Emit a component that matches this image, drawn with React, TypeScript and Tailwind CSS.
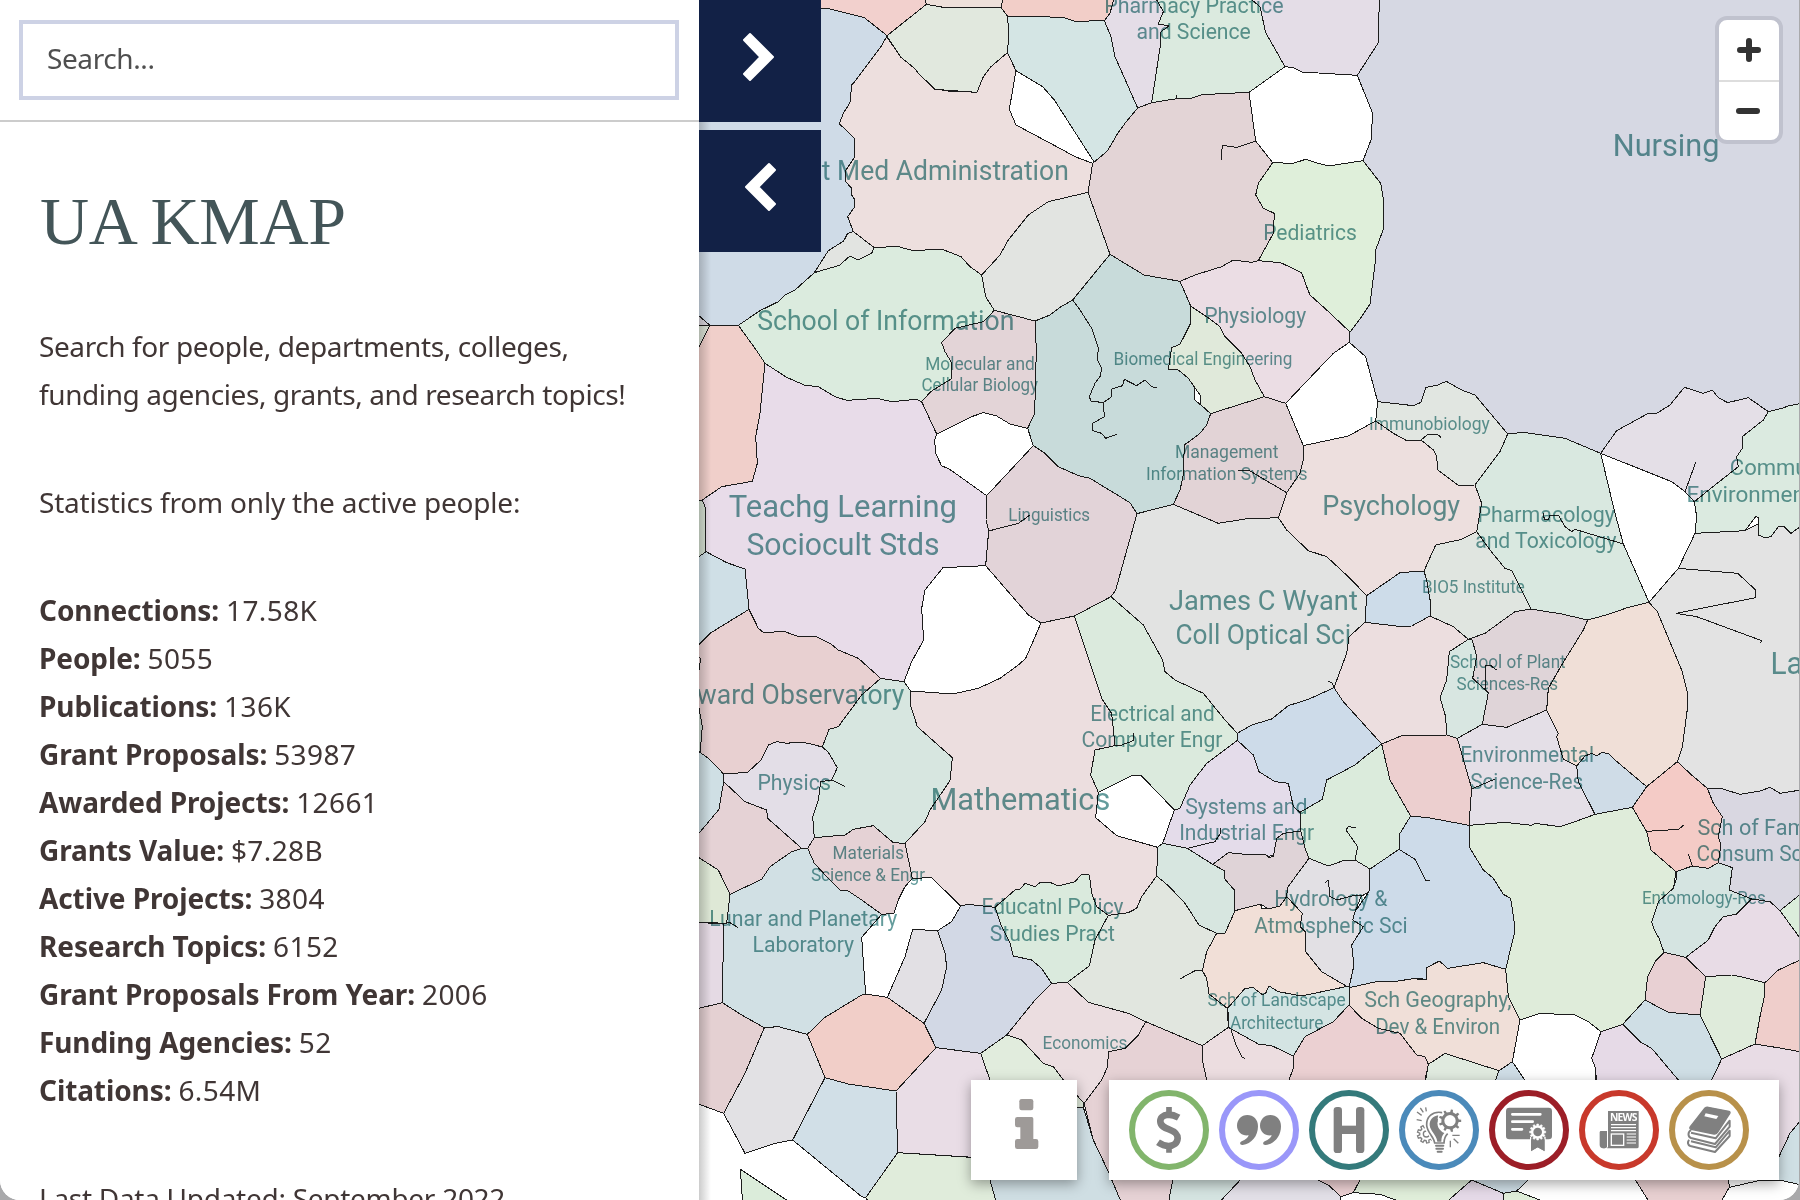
import React from "react";

/* Map geometry is expressed in map units, three per screen pixel. */
type Cell = [string, string];

const cells: Cell[] = [
  ["#d6d8e3", "2030,-9 2030,120 1970,230 2000,340 1990,480 2040,560 2040,700 1990,910 1950,990 1950,1030 1990,1100 2030,1220 2200,1320 2700,1420 3330,1420 3330,-9"],
  ["#cfdbe7", "-9,-9 600,-9 600,990 -9,990"],
  ["#f2d0cd", "360,24 405,27 508,53 575,106 720,60 700,-9 360,-9"],
  ["#eee0da", "688,-9 694,13 745,22 918,22 926,-9"],
  ["#f2cec8", "926,-9 918,22 937,48 1105,52 1140,64 1228,62 1245,40 1258,-9"],
  ["#d4e5e4", "937,48 1105,52 1140,64 1228,62 1248,110 1260,170 1328,324 1290,370 1268,400 1238,452 1198,487 1078,400 963,212 937,158 942,100"],
  ["#e1e8de", "694,13 745,22 918,22 937,48 942,100 937,158 888,200 865,230 846,277 720,268 670,220 662,208 618,172 575,108"],
  ["#eddfde", "575,110 618,172 662,208 670,220 720,268 740,270 778,276 790,274 846,277 865,230 888,200 937,158 963,212 943,328 963,375 1100,448 1193,490 1179,577 1060,605 1000,645 940,720 915,765 860,825 825,800 798,770 742,748 725,752 690,750 655,752 610,740 537,742 475,695 458,650 478,622 480,600 470,585 470,565 452,545 452,512 480,470 478,415 433,371 445,340 465,308 470,255 475,250 558,140"],
  ["#ffffff", "963,212 1043,260 1078,300 1198,487 1193,490 1140,470 1100,448 963,375 943,328"],
  ["#e2e4e1", "475,695 537,742 530,760 490,780 465,768 433,796 358,818 400,752 446,723 458,700"],
  ["#dbebde", "537,742 610,740 655,752 690,750 742,748 798,770 825,800 860,825 872,890 898,931 865,965 780,985 740,1028 750,1055 768,1085 768,1137 707,1175 680,1205 665,1198 590,1205 545,1195 455,1201 420,1190 370,1160 330,1156 275,1132 210,1090 180,1045 130,976 195,932 250,905 270,885 300,870 358,818 433,796 465,768 490,780 530,760"],
  ["#e2e4e1", "1179,577 1245,763 1133,900 1095,922 1065,945 1020,963 898,931 872,890 860,825 915,765 940,720 1000,645 1060,605"],
  ["#e3d4d6", "1193,490 1238,452 1268,400 1290,370 1328,324 1370,308 1445,296 1485,296 1520,284 1662,277 1682,423 1733,488 1690,550 1682,585 1705,625 1738,640 1735,700 1690,782 1670,787 1615,780 1580,800 1500,825 1455,844 1347,825 1245,763 1179,577"],
  ["#e4dde7", "1258,-9 1245,40 1228,62 1248,110 1260,170 1328,324 1370,308 1397,130 1398,95 1422,78 1390,72 1405,35 1380,-9"],
  ["#dbeadf", "1380,-9 1405,35 1390,72 1422,78 1398,95 1397,130 1370,308 1445,296 1485,296 1520,284 1662,277 1770,200 1712,98 1695,20 1660,-9"],
  ["#e4dde7", "1660,-9 1695,20 1712,98 1770,200 1795,203 1820,216 1987,226 2050,128 2053,-9"],
  ["#ffffff", "1662,277 1770,200 1795,203 1820,216 1987,226 2033,340 2028,420 2004,482 1900,498 1870,490 1832,478 1795,490 1733,488 1682,423"],
  ["#dfefda", "1733,488 1795,490 1832,478 1870,490 1900,498 2004,482 2057,550 2067,610 2066,685 2042,750 2042,775 2025,912 1995,957 1965,996 1895,930 1845,885 1835,860 1820,818 1757,788 1690,782 1735,700 1738,640 1705,625 1682,585 1690,550"],
  ["#ebdde4", "1690,782 1757,788 1820,818 1835,860 1845,885 1895,930 1965,996 1963,1027 1915,1060 1772,1210 1708,1190 1680,1140 1665,1100 1640,1060 1590,1010 1575,980 1535,950 1487,918 1455,844 1500,825 1580,800 1615,780 1670,787"],
  ["#c8dbda", "1245,763 1347,825 1455,844 1487,918 1487,970 1500,1200 1547,1241 1535,1275 1515,1300 1468,1335 1465,1425 1455,1470 1435,1513 1326,1541 1305,1508 1185,1435 1150,1427 1090,1400 1050,1360 1015,1337 998,1285 1019,1240 1024,1050 1020,963 1065,945 1095,922 1133,900"],
  ["#e0e9da", "1487,918 1535,950 1575,980 1590,1010 1640,1060 1665,1100 1680,1140 1708,1190 1547,1241 1518,1215 1515,1185 1480,1135 1450,1110 1420,1108 1430,1043 1455,1033 1487,970"],
  ["#e3d4d7", "898,931 1020,963 1024,1050 1019,1240 998,1285 945,1272 905,1248 865,1238 830,1250 725,1302 680,1205 707,1175 768,1137 768,1085 750,1055 740,1028 780,985 865,965"],
  ["#ffffff", "725,1302 830,1250 865,1238 905,1248 945,1272 998,1285 1015,1337 875,1487 760,1405 740,1398 722,1360 719,1320"],
  ["#e8dce9", "210,1090 275,1132 330,1156 370,1160 420,1190 455,1201 545,1195 590,1205 665,1198 680,1205 725,1302 719,1320 722,1360 740,1398 760,1405 875,1487 873,1560 881,1593 872,1697 744,1703 690,1770 680,1825 686,1920 650,1985 627,2045 557,2035 490,1975 430,1950 408,1932 365,1910 305,1908 270,1895 205,1897 190,1885 162,1828 150,1707 95,1688 33,1655 30,1520 22,1500 80,1460 172,1444 187,1390 182,1310 195,1240"],
  ["#d9d6dc", "-9,930 15,950 45,976 -9,978"],
  ["#dbe3d6", "-9,978 45,976 12,1040 -9,1060"],
  ["#f0cfca", "45,976 130,976 180,1045 210,1090 195,1240 182,1310 187,1390 172,1444 80,1460 22,1500 -9,1500 -9,1060 12,1040"],
  ["#d6e2d3", "-9,1500 22,1500 30,1520 33,1655 -9,1685"],
  ["#cfdfe6", "-9,1685 33,1655 95,1688 150,1707 162,1828 110,1860 45,1900 -9,1955"],
  ["#e8d0d1", "162,1828 190,1885 205,1897 270,1895 305,1908 365,1910 408,1932 430,1950 490,1975 557,2035 500,2085 430,2180 402,2188 382,2241 340,2230 310,2226 275,2230 245,2225 220,2235 198,2280 158,2317 86,2322 40,2275 15,2260 -9,2240 -9,1955 45,1900 110,1860"],
  ["#cdd9d2", "-9,2100 12,2125 22,2180 15,2260 -9,2260"],
  ["#ffffff", "744,1703 872,1697 1000,1845 1038,1869 992,1975 970,1995 915,2035 850,2065 773,2082 647,2073 627,2045 650,1985 686,1920 680,1825 690,1770"],
  ["#e2d3d8", "1015,1337 1050,1360 1090,1400 1150,1427 1185,1435 1305,1508 1326,1541 1262,1770 1248,1790 1138,1848 1038,1869 1000,1845 872,1697 881,1593 873,1560 875,1487"],
  ["#ecdedf", "1038,1869 1138,1848 1220,2095 1250,2140 1260,2237 1200,2250 1187,2325 1210,2377 1202,2453 1265,2507 1388,2542 1385,2628 1340,2690 1325,2725 1300,2738 1240,2746 1000,2780 900,2722 797,2718 710,2633 652,2635 630,2530 690,2465 705,2430 765,2342 772,2273 667,2180 648,2120 647,2073 773,2082 850,2065 915,2035 970,1995 992,1975"],
  ["#d7e6e0", "557,2035 627,2045 647,2073 648,2120 667,2180 772,2273 765,2342 705,2430 690,2465 630,2530 595,2528 535,2477 475,2488 450,2505 358,2513 353,2450 370,2400 377,2345 410,2340 427,2303 400,2257 382,2241 402,2188 430,2180 500,2085"],
  ["#dbeadd", "1138,1848 1248,1790 1345,1875 1403,1980 1410,2015 1440,2040 1525,2080 1590,2160 1627,2200 1627,2221 1535,2290 1485,2355 1455,2425 1438,2430 1340,2328 1310,2327 1210,2377 1187,2325 1200,2250 1260,2237 1250,2140 1220,2095"],
  ["#ffffff", "1210,2377 1310,2327 1340,2328 1438,2430 1403,2530 1388,2542 1265,2507 1202,2453"],
  ["#e2e3e2", "1326,1541 1435,1513 1570,1570 1650,1557 1750,1553 1775,1590 1840,1652 1895,1670 1965,1735 2015,1787 2010,1867 1962,1910 1955,1960 1917,2063 1840,2098 1780,2117 1730,2157 1670,2175 1627,2200 1590,2160 1525,2080 1440,2040 1410,2015 1403,1980 1345,1875 1248,1790 1262,1770"],
  ["#e2d3d6", "1547,1241 1708,1190 1772,1210 1825,1337 1825,1380 1815,1420 1775,1478 1750,1553 1650,1557 1570,1570 1435,1513 1455,1470 1465,1425 1468,1335 1515,1300 1535,1275"],
  ["#ffffff", "1963,1027 2012,1070 2048,1205 2042,1263 1960,1308 1825,1337 1772,1210 1915,1060"],
  ["#e1e6e1", "2048,1205 2155,1217 2178,1207 2193,1162 2228,1155 2254,1144 2300,1170 2340,1185 2438,1302 2415,1355 2340,1455 2290,1456 2228,1410 2225,1370 2215,1350 2178,1320 2137,1323 2095,1300 2042,1263"],
  ["#eddfde", "1825,1337 1960,1308 2042,1263 2095,1300 2137,1323 2178,1320 2215,1350 2225,1370 2228,1410 2290,1456 2340,1455 2360,1510 2345,1595 2300,1618 2222,1635 2187,1713 2115,1718 2015,1787 1965,1735 1895,1670 1840,1652 1775,1590 1750,1553 1775,1478 1815,1420 1825,1380"],
  ["#e0e5e0", "2345,1595 2385,1650 2430,1705 2450,1712 2508,1827 2460,1835 2425,1860 2370,1900 2320,1918 2275,1880 2205,1848 2207,1810 2195,1740 2187,1713 2222,1635 2300,1618"],
  ["#cddce9", "2015,1787 2115,1718 2187,1713 2195,1740 2207,1810 2205,1848 2150,1878 2120,1880 2010,1867"],
  ["#d9e8e0", "2438,1302 2485,1297 2610,1315 2717,1360 2760,1540 2785,1632 2862,1807 2800,1822 2740,1843 2678,1860 2600,1842 2508,1827 2450,1712 2430,1705 2385,1650 2345,1595 2360,1510 2340,1455 2415,1355"],
  ["#ffffff", "2717,1360 2930,1445 2970,1475 2998,1505 3005,1550 3000,1600 2950,1705 2862,1807 2785,1632 2760,1540"],
  ["#e4dfe7", "2717,1360 2765,1292 2860,1240 2885,1240 2925,1215 2968,1162 3025,1180 3052,1170 3070,1193 3098,1208 3160,1193 3220,1235 3205,1260 3142,1310 3142,1345 3125,1370 3130,1400 3060,1455 2998,1505 2970,1475 2930,1445"],
  ["#e3e3e3", "3000,1600 3150,1592 3330,1500 3330,2370 3255,2380 3225,2362 3195,2373 3135,2383 3080,2366 3037,2365 2990,2325 2947,2285 2962,2240 2978,2120 2978,2080 2960,2010 2887,1835 2862,1807 2950,1705"],
  ["#dbeae0", "3220,1235 3260,1225 3280,1218 3330,1208 3330,1570 3288,1600 3265,1578 3250,1580 3228,1610 3210,1613 3190,1605 3190,1552 3182,1550 3150,1592 3000,1600 3005,1550 2998,1505 3060,1455 3130,1400 3125,1370 3142,1345 3142,1310 3205,1260"],
  ["#f0dfd7", "2862,1807 2887,1835 2960,2010 2978,2080 2978,2120 2962,2240 2947,2285 2855,2360 2760,2280 2645,2298 2605,2278 2585,2210 2590,2200 2555,2130 2560,2065 2600,1995 2665,1890 2678,1860 2740,1843 2800,1822"],
  ["#dfd4d8", "2320,1918 2370,1900 2425,1860 2460,1835 2508,1827 2600,1842 2678,1860 2665,1890 2600,1995 2560,2065 2555,2130 2435,2182 2362,2173 2380,2078 2333,2035 2345,1970 2332,1920"],
  ["#d8e6e1", "2320,1918 2332,1920 2345,1970 2333,2035 2380,2078 2362,2173 2287,2215 2255,2205 2252,2150 2235,2093 2255,2040 2263,1955"],
  ["#ecdedf", "2010,1867 2120,1880 2150,1878 2205,1848 2275,1880 2320,1918 2263,1955 2255,2040 2235,2093 2252,2150 2255,2205 2120,2207 2060,2232 1945,2105 1917,2063 1955,1960 1962,1910"],
  ["#cddbe9", "1917,2063 1945,2105 2060,2232 2010,2270 1980,2295 1895,2340 1882,2398 1815,2437 1795,2420 1780,2350 1740,2345 1692,2315 1675,2265 1627,2221 1627,2200 1670,2175 1730,2157 1780,2117 1840,2098"],
  ["#e4dcea", "1627,2221 1675,2265 1692,2315 1740,2345 1780,2350 1795,2420 1815,2437 1817,2493 1755,2560 1600,2600 1553,2593 1477,2545 1403,2530 1438,2430 1455,2425 1485,2355 1535,2290"],
  ["#dfd3d7", "1553,2593 1600,2558 1640,2562 1710,2562 1722,2572 1735,2570 1745,2515 1765,2500 1817,2493 1830,2545 1842,2575 1778,2662 1775,2690 1755,2718 1720,2727 1697,2712 1620,2732 1618,2670 1590,2638 1588,2612"],
  ["#d7e6e0", "1388,2542 1403,2530 1477,2545 1553,2593 1588,2612 1590,2638 1618,2670 1620,2732 1590,2800 1565,2800 1512,2775 1470,2710 1420,2657 1385,2628"],
  ["#dbebdc", "2060,2232 2085,2340 2147,2448 2115,2500 2112,2548 2025,2607 1980,2580 1950,2580 1900,2598 1842,2575 1830,2545 1817,2493 1815,2437 1882,2398 1895,2340 1980,2295 2010,2270"],
  ["#eccfcf", "2060,2232 2120,2207 2255,2205 2287,2215 2330,2365 2322,2476 2200,2453 2147,2448 2085,2340"],
  ["#e4dfe7", "2287,2215 2362,2173 2435,2182 2555,2130 2590,2200 2585,2210 2605,2278 2645,2298 2650,2345 2700,2443 2640,2465 2595,2480 2520,2470 2510,2476 2430,2467 2322,2476 2330,2365"],
  ["#cfdce7", "2645,2298 2670,2268 2690,2260 2705,2267 2720,2258 2740,2260 2760,2280 2855,2360 2812,2422 2700,2443 2650,2345"],
  ["#dfecda", "2322,2476 2430,2467 2510,2476 2520,2470 2595,2480 2640,2465 2700,2443 2812,2422 2855,2495 2868,2550 2943,2615 2930,2700 2907,2857 2880,2885 2858,2930 2850,3000 2783,3073 2718,3095 2640,3045 2535,3040 2475,3060 2440,2990 2400,2700 2365,2610 2322,2540"],
  ["#f4cbc6", "2947,2285 2990,2325 3037,2365 3055,2410 3082,2450 3070,2510 3078,2535 3070,2588 3040,2605 2992,2598 2943,2615 2868,2550 2855,2495 2812,2422 2855,2360"],
  ["#d9d7e1", "3037,2365 3080,2366 3135,2383 3195,2373 3225,2362 3255,2380 3330,2368 3330,2672 3255,2732 3225,2705 3170,2697 3103,2670 3112,2603 3070,2588 3078,2535 3070,2510 3082,2450 3055,2410"],
  ["#d5e4e1", "2943,2615 2992,2598 3040,2605 3070,2588 3112,2603 3103,2670 3170,2697 3125,2742 3085,2750 3060,2780 3040,2820 2972,2872 2907,2857 2892,2815 2878,2790 2870,2765 2890,2705 2935,2665 2943,2640"],
  ["#e8dce6", "3170,2697 3225,2705 3255,2732 3330,2835 3330,2873 3250,2910 3210,2948 3145,2932 3110,2925 3032,2930 2972,2872 3040,2820 3060,2780 3085,2750 3125,2742"],
  ["#dbeddb", "3255,2732 3330,2672 3330,2835"],
  ["#efcecb", "3330,2873 3250,2910 3210,2948 3208,2990 3195,3050 3180,3132 3260,3145 3330,3158"],
  ["#dfebdb", "3032,2930 3110,2925 3145,2932 3210,2948 3208,2990 3195,3050 3180,3132 3080,3177 3015,3045"],
  ["#e8d0d3", "2907,2857 2972,2872 3032,2930 3015,3045 2920,3037 2850,3000 2858,2930 2880,2885"],
  ["#cfdee5", "2850,3000 2920,3037 3015,3045 3080,3177 3050,3240 3050,3300 2960,3300 2950,3240 2870,3145 2835,3125 2783,3073"],
  ["#e6dae7", "2718,3095 2783,3073 2835,3125 2870,3145 2950,3240 2960,3300 2705,3300 2705,3240 2700,3200 2690,3175"],
  ["#e8dce5", "3080,3177 3180,3132 3260,3145 3330,3158 3330,3345 3285,3400 3252,3470 3050,3470 3050,3240"],
  ["#cfdfe4", "3330,3345 3285,3400 3252,3470 3200,3540 3252,3540 3330,3557"],
  ["#cddbe9", "2147,2448 2200,2453 2322,2476 2322,2540 2365,2610 2395,2635 2425,2683 2447,2695 2458,2770 2458,2800 2432,2908 2365,2888 2258,2905 2233,2883 2195,2903 2195,2938 2160,2935 2110,2943 2045,2945 1962,2963 1977,2895 1970,2835 2005,2780 1973,2760 1980,2735 2022,2675 2025,2607 2112,2548 2115,2500"],
  ["#f0dfd8", "1962,2963 2045,2945 2110,2943 2160,2935 2178,2940 2195,2938 2195,2903 2233,2883 2258,2905 2365,2888 2432,2908 2440,2990 2475,3060 2452,3185 2412,3212 2290,3173 2250,3160 2200,3193 2190,3170 2165,3165 2115,3100 2050,3085 2000,3055 1962,3015"],
  ["#e2e0e4", "1842,2575 1900,2598 1950,2580 1980,2580 2025,2607 2022,2675 1998,2690 1980,2735 1973,2760 2005,2780 1970,2835 1977,2895 1962,2963 1880,2915 1832,2855 1832,2797 1815,2780 1822,2740 1775,2690 1778,2662"],
  ["#f1dfd7", "1620,2732 1697,2712 1700,2725 1720,2727 1755,2718 1775,2690 1822,2740 1815,2780 1832,2797 1832,2855 1880,2915 1962,2963 1820,2988 1750,2975 1722,2958 1700,3000 1597,3025 1542,2982 1535,2935 1522,2912 1535,2855 1565,2800 1590,2800"],
  ["#e1e6df", "1385,2628 1420,2657 1470,2710 1512,2775 1565,2800 1535,2855 1522,2912 1535,2935 1542,2982 1597,3025 1600,3082 1522,3137 1352,3065 1300,3040 1180,3007 1117,2947 1183,2898 1200,2820 1240,2746 1300,2738 1325,2725 1340,2690"],
  ["#daeadd", "900,2722 960,2670 975,2668 990,2650 1020,2660 1035,2648 1065,2647 1090,2658 1140,2645 1160,2622 1183,2625 1190,2680 1205,2720 1240,2746 1200,2820 1183,2898 1117,2947 1070,2950 1040,2905 1010,2880 955,2868 945,2830 920,2780"],
  ["#d2d8e5", "797,2718 820,2713 900,2722 920,2780 945,2830 955,2868 1010,2880 1040,2905 1070,2950 1020,3000 935,3105 857,3160 723,3143 687,3070 740,2970 755,2900 750,2860 728,2792 770,2765"],
  ["#d4e4e3", "1597,3025 1620,3000 1650,2965 1675,2963 1702,2984 1712,2980 1722,2958 1750,2975 1820,2988 1962,2958 1962,3015 1915,3065 1830,3110 1795,3168 1730,3137 1690,3132 1600,3082 1602,3050"],
  ["#ebdde0", "1070,2950 1117,2947 1180,3007 1300,3040 1352,3065 1330,3105 1290,3145 1240,3155 1238,3200 1220,3240 1167,3310 1105,3240 1075,3200 1045,3190 980,3120 935,3105 1020,3000"],
  ["#e6d2d5", "1352,3065 1522,3137 1522,3180 1535,3240 1600,3300 1435,3530 1420,3610 1280,3610 1240,3515 1195,3420 1167,3310 1220,3240 1238,3200 1240,3155 1290,3145 1330,3105"],
  ["#ecdde0", "1522,3137 1600,3082 1690,3132 1730,3137 1795,3168 1795,3205 1782,3240 1780,3300 1540,3300 1535,3240 1522,3180"],
  ["#ebd0d2", "1962,3015 2000,3055 2050,3085 2115,3100 2165,3165 2190,3170 2200,3193 2190,3240 2190,3300 1780,3300 1782,3240 1795,3205 1795,3168 1830,3110 1915,3065"],
  ["#e0eadf", "2200,3193 2250,3160 2290,3173 2412,3212 2398,3250 2190,3250"],
  ["#cfdde6", "2412,3212 2452,3185 2500,3245 2510,3300 2398,3300 2398,3250"],
  ["#ffffff", "2475,3060 2535,3040 2640,3045 2680,3065 2718,3095 2690,3175 2700,3200 2705,3300 2530,3300 2452,3185"],
  ["#e2e0e4", "653,2788 728,2792 750,2860 755,2900 740,2970 687,3070 577,2992 630,2870"],
  ["#ffffff", "597,2740 610,2700 630,2660 652,2635 710,2633 797,2718 770,2765 728,2792 653,2788 630,2870 577,2992 512,2982 500,2812 560,2743"],
  ["#e5d2d5", "358,2513 450,2505 475,2488 535,2477 595,2528 630,2530 652,2635 630,2660 610,2700 597,2740 560,2743 500,2700 460,2673 435,2670 400,2635 358,2590 338,2545"],
  ["#e3dee7", "86,2322 158,2317 198,2280 220,2235 245,2225 275,2230 310,2226 340,2230 382,2241 400,2257 427,2303 410,2340 377,2345 370,2400 353,2450 358,2513 338,2545 320,2545 218,2455 215,2430 150,2405 86,2345"],
  ["#e5d2d5", "86,2345 150,2405 215,2430 218,2455 320,2545 290,2555 225,2600 200,2638 105,2683 70,2610 -9,2560 -9,2525 72,2428"],
  ["#cfdfe4", "-9,2240 40,2275 86,2322 86,2345 72,2428 -9,2525"],
  ["#dee8d6", "-9,2560 70,2610 105,2683 95,2770 -9,2766"],
  ["#d1e0e4", "105,2683 200,2638 225,2600 290,2555 320,2545 338,2545 358,2590 400,2635 435,2670 460,2673 500,2700 560,2743 500,2812 512,2982 500,2985 390,3052 337,3103 250,3080 208,3083 140,3045 82,3008 86,2772 95,2770"],
  ["#e5dae4", "-9,2766 86,2772 82,3008 -9,3030"],
  ["#e4d0d2", "-9,3030 82,3008 140,3045 208,3083 150,3220 86,3340 -9,3305"],
  ["#e2e1e4", "208,3083 250,3080 337,3103 390,3233 293,3420 240,3430 150,3460 86,3340 150,3220"],
  ["#f1cec8", "512,2982 577,2992 687,3070 723,3143 603,3273 460,3252 390,3233 337,3103 390,3052 500,2985"],
  ["#d1dfe7", "390,3233 460,3252 603,3273 608,3458 512,3593 500,3590 293,3420"],
  ["#e9dde6", "723,3143 857,3160 885,3240 885,3475 608,3458 603,3273"],
  ["#e1ecdd", "857,3160 935,3105 980,3120 1045,3190 1075,3200 1105,3240 1167,3310 1165,3322 885,3322 885,3240"],
  ["#e0ecdb", "608,3458 830,3472 885,3540 905,3610 525,3610 512,3593"],
  ["#cfdee3", "885,3540 885,3322 1165,3322 1195,3420 1240,3515 1280,3610 905,3610"],
  ["#dbecda", "136,3508 290,3610 143,3610"],
  ["#d5e4e1", "1435,3530 1645,3530 1575,3610 1420,3610"],
  ["#e2dfe7", "1645,3530 1865,3530 1900,3555 1938,3590 1935,3610 1570,3610"],
  ["#ebd0d2", "1850,3530 2000,3530 1975,3578 1938,3590 1900,3555"],
  ["#e0eeda", "2000,3530 2330,3530 2330,3540 2250,3610 2130,3610 2055,3583 1975,3578"],
  ["#e5dae8", "2250,3610 2330,3540 2425,3580 2425,3610"],
  ["#cfdee6", "2330,3540 2350,3530 2510,3530 2465,3573 2425,3580"],
  ["#e0eeda", "2425,3580 2465,3573 2560,3610 2425,3610"],
  ["#e8d0d1", "2815,3530 3100,3530 3103,3562 3075,3610 2865,3610"],
];

const creases: string[] = [
  "1682,423 1625,442 1582,436 1578,480",
  "1444,284 1444,297",
  "1133,900 1155,930 1190,985 1210,1045 1207,1080 1220,1105 1215,1130 1200,1150 1183,1190 1188,1203 1225,1208 1228,1250 1193,1270 1193,1292 1220,1300 1232,1315 1265,1303",
  "1225,1208 1250,1190 1250,1167 1283,1157 1288,1138 1325,1157 1350,1140 1370,1160 1386,1163",
  "881,1593 970,1570 1005,1545",
  "410,2340 450,2360",
  "1260,2237 1280,2235 1315,2222 1316,2198",
  "1917,2063 1912,2050 1900,2044",
  "1775,1478 1665,1413 1630,1412",
  "2178,1320 2200,1302 2230,1305 2238,1313",
  "2785,1632 2640,1588 2630,1595 2610,1580 2590,1545 2565,1545 2560,1560 2548,1558 2545,1540",
  "2970,1475 3003,1385",
  "2950,1705 3128,1720 3182,1770 3182,1793 2943,1840 3005,1850 3200,1922 3197,1930",
  "2372,2070 2372,1995 2385,1995 2405,2010",
  "1477,2545 1560,2525 1576,2500 1576,2485",
  "1980,2580 1988,2540 1953,2490 1960,2480 1983,2483",
  "2330,2367 2400,2337",
  "2855,2494 2950,2488 2967,2475",
  "2992,2598 2980,2563",
  "2112,2548 2160,2578 2193,2643 2205,2641",
  "2000,2685 1975,2687 1925,2700 1905,2690 1900,2640 1890,2648",
  "1522,2912 1500,2912 1455,2937",
  "95,2768 105,2768 128,2782",
  "1608,3090 1625,3140 1640,3170 1650,3175",
  "3103,3562 3200,3540",
  "12,1970 15,1975 15,1990 12,2010",
];

/* text, left, right, baseline, size */
type Label = [string, number, number, number, number];
const labels: Label[] = [
  ["Dept Med Administration", 245, 1118, 539, 84],
  ["School of Information", 190, 955, 991, 84],
  ["Molecular and", 693, 1017, 1109, 56],
  ["Cellular Biology", 682, 1027, 1173, 56],
  ["Teachg Learning", 105, 782, 1551, 94],
  ["Sociocult Stds", 158, 730, 1666, 94],
  ["Linguistics", 942, 1183, 1562, 56],
  ["Pharmacy Practice", 1230, 1763, 40, 65],
  ["and Science", 1327, 1665, 118, 65],
  ["Pediatrics", 1707, 1983, 720, 65],
  ["Physiology", 1530, 1831, 970, 65],
  ["Nursing", 2757, 3070, 469, 94],
  ["Biomedical Engineering", 1258, 1790, 1095, 56],
  ["Management", 1442, 1748, 1375, 56],
  ["Information Systems", 1355, 1835, 1439, 56],
  ["Immunobiology", 2024, 2382, 1290, 56],
  ["Psychology", 1885, 2292, 1544, 84],
  ["Pharmacology", 2350, 2757, 1565, 65],
  ["and Toxicology", 2343, 2762, 1644, 65],
  ["Community,", 3107, 3450, 1425, 65],
  ["Environment &", 2977, 3408, 1505, 65],
  ["BIO5 Institute", 2183, 2487, 1779, 56],
  ["James C Wyant", 1425, 1985, 1831, 84],
  ["Coll Optical Sci", 1445, 1965, 1932, 84],
  ["Steward Observatory", -107, 625, 2111, 84],
  ["Electrical and", 1188, 1557, 2164, 65],
  ["Computer Engr", 1162, 1580, 2242, 65],
  ["Physics", 190, 405, 2369, 65],
  ["Mathematics", 710, 1242, 2429, 94],
  ["Systems and", 1473, 1835, 2442, 65],
  ["Industrial Engr", 1455, 1855, 2521, 65],
  ["Materials", 415, 625, 2578, 56],
  ["Science & Engr", 350, 688, 2643, 56],
  ["Lunar and Planetary", 45, 604, 2777, 65],
  ["Laboratory", 175, 475, 2855, 65],
  ["Educatnl Policy", 862, 1283, 2743, 65],
  ["Studies Pract", 887, 1257, 2823, 65],
  ["Hydrology &", 1740, 2075, 2719, 65],
  ["Atmospheric Sci", 1680, 2135, 2799, 65],
  ["School of Plant", 2267, 2610, 2004, 56],
  ["Sciences-Res", 2287, 2587, 2069, 56],
  ["Environmental", 2298, 2695, 2287, 65],
  ["Science-Res", 2328, 2662, 2366, 65],
  ["Law", 3230, 3387, 2021, 94],
  ["Sch of Family", 3010, 3394, 2504, 65],
  ["Consum Sci", 3007, 3335, 2584, 65],
  ["Entomology-Res", 2843, 3210, 2711, 56],
  ["Sch of Landscape", 1540, 1950, 3019, 56],
  ["Architecture", 1607, 1883, 3086, 56],
  ["Sch Geography,", 2010, 2447, 3022, 65],
  ["Dev & Environ", 2043, 2413, 3101, 65],
  ["Economics", 1045, 1295, 3147, 56],
];

function KnowledgeMap() {
  return (
    <svg viewBox="12 0 3303 3600" className="block h-[1200px] w-[1101px] bg-white">
      <g stroke="#1c1c1c" strokeWidth={3} strokeLinejoin="round" shapeRendering="crispEdges">
        {cells.map(([fill, points], i) => (
          <polygon key={i} fill={fill} points={points} />
        ))}
        {creases.map((points) => (
          <polyline key={points} fill="none" points={points} />
        ))}
      </g>
      <g fill="#649c9c" className="font-['Roboto'] mix-blend-multiply">
        {labels.map(([text, x1, x2, y, size]) => (
          <text
            key={text}
            x={x1 - size * 0.04}
            y={y}
            fontSize={size}
            textLength={x2 - x1 + size * 0.08}
            lengthAdjust="spacingAndGlyphs"
          >
            {text}
          </text>
        ))}
      </g>
    </svg>
  );
}

function gearPath(cx: number, cy: number, outer: number, inner: number, teeth: number) {
  const pts: string[] = [];
  const step = (Math.PI * 2) / teeth;
  for (let i = 0; i < teeth; i++) {
    const a = i * step;
    for (const [d, r] of [[-0.3, inner], [-0.2, outer], [0.2, outer], [0.3, inner]]) {
      pts.push(`${(cx + r * Math.cos(a + d * step)).toFixed(1)},${(cy + r * Math.sin(a + d * step)).toFixed(1)}`);
    }
  }
  return `M${pts.join("L")}Z`;
}

const GREY = "#808080";

function Dollar() {
  return (
    <g fill="none" stroke={GREY} strokeWidth={20}>
      <path d="M149 83C137 76 126 74 117 74C102 75 93 84 94 95C95 108 106 113 120 118C136 124 146 130 146 145C145 160 134 168 119 168C107 168 97 164 87 157" />
      <path d="M120 51V70M120 172V188" strokeWidth={17} />
    </g>
  );
}

function Quotes() {
  const d = "M85 75C103 75 117 88 117 109C117 138 98 162 71 165C62 166 61 157 68 154C80 149 87 143 89 136C70 139 54 125 54 107C54 89 67 75 85 75Z";
  return (
    <g fill={GREY}>
      <path d={d} />
      <path d={d} transform="translate(69 0)" />
    </g>
  );
}

function LetterH() {
  return (
    <g fill={GREY}>
      <rect x={74} y={51} width={25} height={138} rx={10} />
      <rect x={141} y={51} width={25} height={138} rx={10} />
      <rect x={92} y={107} width={56} height={25} />
    </g>
  );
}

function Idea() {
  return (
    <g fill={GREY} stroke={GREY}>
      <path d={gearPath(82, 132, 27, 20, 9)} fill="none" strokeWidth={4} />
      <circle cx={82} cy={132} r={9} fill="none" strokeWidth={4} />
      <path d="M122 60C94 60 76 80 76 104C76 128 98 140 102 162H140C142 148 148 140 156 128L122 100Z" fill="#fff" stroke="none" />
      <path d="M130 68C100 62 82 82 83 105C84 128 104 138 107 159H135C135 146 139 138 146 131" fill="none" strokeWidth={5} />
      <path d="M118 76C100 78 91 92 92 106C94 124 112 134 115 155H127C127 142 130 136 136 129C122 122 114 110 116 98Z" stroke="none" />
      <path d={gearPath(153, 92, 36, 28, 9)} stroke="#fff" strokeWidth={4} />
      <circle cx={153} cy={92} r={17} fill="#fff" stroke="none" />
      <path d="M111 167H133M112 176H132M116 185H128" strokeWidth={6} strokeLinecap="round" />
      <path d="M54 66L68 76M53 89L68 92M64 54L73 67M80 52L82 64M154 152V172M164 146L178 160M160 136H182" strokeWidth={4} fill="none" />
    </g>
  );
}

function Certificate() {
  return (
    <g>
      <rect x={51} y={53} width={138} height={95} rx={10} fill={GREY} />
      <path d="M70 73H154M70 95H131M70 118H99" stroke="#fff" strokeWidth={8} strokeLinecap="round" />
      <path d="M125 142V186L146 174L168 186V142Z" fill={GREY} stroke="#fff" strokeWidth={4} />
      <path d="M126 148V184L146 172L167 184V148Z" fill={GREY} />
      <circle cx={146} cy={126} r={26} fill={GREY} />
      <path d={gearPath(146, 126, 24, 19, 12)} fill="#fff" stroke="#fff" strokeWidth={2} />
      <circle cx={146} cy={126} r={13} fill={GREY} />
    </g>
  );
}

function News() {
  return (
    <g>
      <path d="M87 63H179V170Q179 175 174 175H84L87 170Z" fill={GREY} />
      <path d="M64 123H84V172Q80 176 72 175Q62 174 62 164V126Z" fill={GREY} />
      <text x={93} y={94} textLength={82} fontSize={31} fontWeight={700} fill="#fff" className="font-['Noto_Sans']">
        NEWS
      </text>
      <path d="M96 104H171M96 113H171M96 122H171M143 132H171M143 141H171M143 150H171M143 159H171" stroke="#fff" strokeWidth={3.5} />
      <rect x={97} y={132} width={37} height={34} fill="none" stroke="#fff" strokeWidth={4} />
    </g>
  );
}

function Books() {
  return (
    <g strokeLinejoin="round">
      <path d="M60 149C55 157 56 165 64 168L138 186L182 138V122L140 172L66 154" fill="#fff" stroke={GREY} strokeWidth={6} />
      <path d="M66 120C56 126 56 140 66 144L138 162L182 110V92L140 145L66 128" fill="#fff" stroke={GREY} strokeWidth={6} />
      <path d="M108 54Q112 51 118 52L180 64Q185 66 182 71L145 128Q141 133 135 132L66 118Q60 115 64 110Z" fill={GREY} stroke={GREY} strokeWidth={4} />
      <path d="M110 70L148 78L142 87L106 79Z" fill="#fff" />
    </g>
  );
}

const tools = [
  { name: "grants", ring: "border-[#82b56c]", icon: <Dollar /> },
  { name: "citations", ring: "border-[#9a97f9]", icon: <Quotes /> },
  { name: "h-index", ring: "border-[#347a7b]", icon: <LetterH /> },
  { name: "ideas", ring: "border-[#4b8aba]", icon: <Idea /> },
  { name: "patents", ring: "border-[#9c1e27]", icon: <Certificate /> },
  { name: "news", ring: "border-[#c8392b]", icon: <News /> },
  { name: "books", ring: "border-[#b8914a]", icon: <Books /> },
];

function Toolbar() {
  return (
    <div className="absolute top-[1080px] left-[272px] flex gap-8">
      <button className="flex h-[100px] w-[106px] justify-center bg-white shadow-[0_4px_12px_rgba(0,0,0,0.35)]" aria-label="Info">
        <svg viewBox="828 540 318 300" className="h-[100px] w-[106px]" fill="#9e9a98">
          <rect x={973} y={597} width={42} height={34} rx={7} />
          <path d="M967 651H1010Q1015 651 1015 656V717H1023Q1030 717 1030 724V740Q1030 747 1023 747H967Q960 747 960 740V724Q960 717 967 717H976V682H967Q960 682 960 675V658Q960 651 967 651Z" />
        </svg>
      </button>
      <div className="flex h-[100px] w-[670px] items-center gap-2.5 bg-white px-5 shadow-[0_4px_12px_rgba(0,0,0,0.35)]">
        {tools.map((t) => (
          <button key={t.name} aria-label={t.name} className={`size-20 shrink-0 rounded-full border-[6px] bg-white ${t.ring}`}>
            <svg viewBox="18 18 204 204" className="size-[68px]">
              {t.icon}
            </svg>
          </button>
        ))}
      </div>
    </div>
  );
}

function MapControls() {
  return (
    <>
      <div className="absolute top-0 left-0 flex flex-col gap-2">
        <button className="size-[122px] bg-[#122146]" aria-label="Expand">
          <svg viewBox="12 0 366 366" className="size-full">
            <path d="M165 102L234 171L165 240L147 222L196 171L147 120Z" fill="#fff" stroke="#fff" strokeWidth={6} strokeLinejoin="round" />
          </svg>
        </button>
        <button className="size-[122px] bg-[#122146]" aria-label="Collapse">
          <svg viewBox="12 390 366 366" className="size-full">
            <path d="M222 492L240 510L190 561L240 612L222 630L153 561Z" fill="#fff" stroke="#fff" strokeWidth={6} strokeLinejoin="round" />
          </svg>
        </button>
      </div>
      <div className="absolute top-4 right-4 rounded-[12px] border-4 border-[#c0c2ce] bg-white">
        <button className="flex h-[62px] w-[60px] items-center justify-center border-b-2 border-[#dddddd]">
          <svg viewBox="0 0 24 24" className="size-6" stroke="#333" strokeWidth={6} strokeLinecap="round">
            <path d="M12 3V21M3 12H21" />
          </svg>
        </button>
        <button className="flex h-[58px] w-[58px] items-center justify-center">
          <svg viewBox="0 0 24 24" className="size-6" stroke="#333" strokeWidth={6} strokeLinecap="round">
            <path d="M3 12H21" />
          </svg>
        </button>
      </div>
    </>
  );
}

const stats: [string, string][] = [
  ["Connections:", "17.58K"],
  ["People:", "5055"],
  ["Publications:", "136K"],
  ["Grant Proposals:", "53987"],
  ["Awarded Projects:", "12661"],
  ["Grants Value:", "$7.28B"],
  ["Active Projects:", "3804"],
  ["Research Topics:", "6152"],
  ["Grant Proposals From Year:", "2006"],
  ["Funding Agencies:", "52"],
  ["Citations:", "6.54M"],
];

function Sidebar() {
  return (
    <aside className="relative z-10 h-[1200px] w-[699px] shrink-0 overflow-hidden bg-white font-['Noto_Sans'] text-[28px] leading-[48px] text-[#403635]">
      <div className="border-b-2 border-[#cccccc] pt-5 pr-5 pb-5 pl-[19px]">
        <input
          className="block h-20 w-full border-4 border-[#cdd2e5] pb-1 pl-6 text-[28px] tracking-[-0.4px] text-[#555] placeholder:text-[#4f4f4f]"
          placeholder="Search..."
        />
      </div>
      <div className="px-[39px] whitespace-nowrap">
        <h1 className="pt-[59px] pl-px font-['Liberation_Serif'] text-[68px] leading-[81px] tracking-[-0.3px] text-[#435558]">UA KMAP</h1>
        <p className="mt-[60px] tracking-[-0.4px]">
          Search for people, departments, colleges,
          <br />
          funding agencies, grants, and research topics!
        </p>
        <p className="mt-[60px] tracking-[-0.21px]">Statistics from only the active people:</p>
        <dl className="mt-[60px]">
          {stats.map(([label, value]) => (
            <div key={label} className="flex gap-[7px]">
              <dt className="font-bold tracking-[-0.1px]">{label}</dt>
              <dd className="tracking-[0.4px]">{value}</dd>
            </div>
          ))}
        </dl>
        <p className="mt-[60px] tracking-[-0.28px]">Last Data Updated: September 2022</p>
      </div>
    </aside>
  );
}

export default function App() {
  return (
    <div className="h-[1200px] w-[1800px] overflow-hidden bg-[#a9a9ab]">
      <div className="flex h-[1200px] w-[1799px] overflow-hidden rounded-b-[20px] bg-white">
        <Sidebar />
        <main className="relative h-[1200px] w-[1100px] overflow-hidden">
          <KnowledgeMap />
          <div className="absolute top-0 left-0 h-full w-3 bg-gradient-to-r from-black/20 to-transparent" />
          <MapControls />
          <Toolbar />
        </main>
      </div>
    </div>
  );
}
